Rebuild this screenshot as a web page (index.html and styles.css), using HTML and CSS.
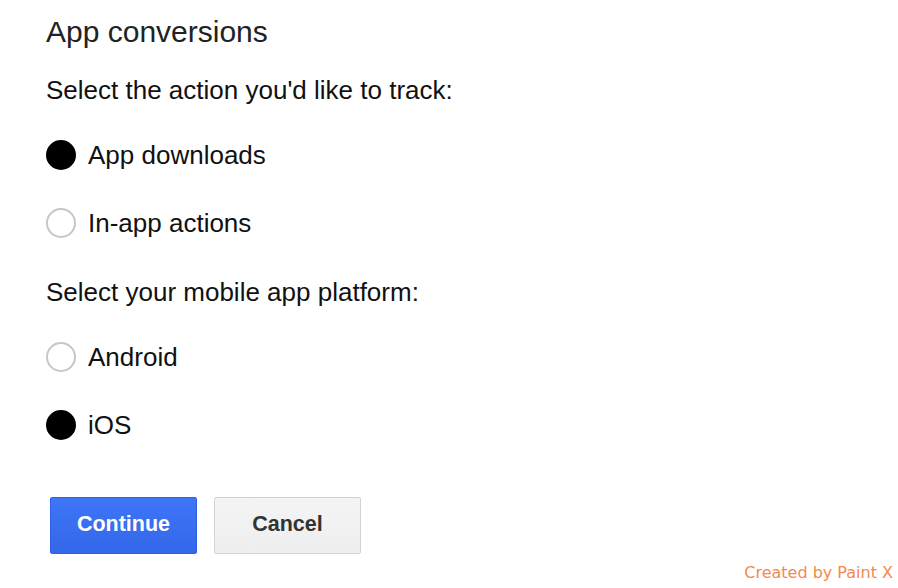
FILE: index.html
```html
<!DOCTYPE html>
<html>
<head>
<meta charset="utf-8">
<link rel="stylesheet" href="styles.css">
</head>
<body>
<div class="page">
  <h1 class="title">App conversions</h1>
  <p class="prompt prompt-first">Select the action you'd like to track:</p>
  <div class="options">
    <label class="option"><span class="radio radio-on"></span><span class="label">App downloads</span></label>
    <label class="option"><span class="radio"></span><span class="label">In-app actions</span></label>
  </div>
  <p class="prompt prompt-second">Select your mobile app platform:</p>
  <div class="options">
    <label class="option"><span class="radio"></span><span class="label">Android</span></label>
    <label class="option"><span class="radio radio-on"></span><span class="label">iOS</span></label>
  </div>
  <div class="actions">
    <button class="btn btn-primary">Continue</button>
    <button class="btn btn-secondary">Cancel</button>
  </div>
  <div class="credit">Created by Paint X</div>
</div>
</body>
</html>
```
FILE: styles.css
```css
html, body {
  margin: 0;
  padding: 0;
  background: #ffffff;
}
body {
  font-family: "Liberation Sans", Arial, Helvetica, sans-serif;
  color: #222222;
}
.page {
  width: 898px;
  height: 588px;
  box-sizing: border-box;
  padding: 12px 0 0 46px;
  display: flex;
  flex-direction: column;
  position: relative;
}
.title {
  margin: 0;
  font-size: 30px;
  font-weight: normal;
  line-height: 40px;
  color: #222222;
}
.prompt {
  margin: 0;
  font-size: 26px;
  line-height: 36px;
  color: #111111;
}
.prompt-first { margin-top: 20px; }
.prompt-second { margin-top: 31px; }
.options {
  display: flex;
  flex-direction: column;
  gap: 28px;
  margin-top: 27px;
}
.option {
  display: flex;
  align-items: center;
  height: 40px;
  gap: 12px;
}
.radio {
  width: 30px;
  height: 30px;
  box-sizing: border-box;
  border-radius: 50%;
  border: 2px solid #c6c6c6;
  background: #ffffff;
  flex: none;
}
.radio-on {
  border-color: #000000;
  background: #000000;
}
.label {
  font-size: 26px;
  color: #111111;
}
.actions {
  display: flex;
  gap: 17px;
  margin-top: 52px;
  padding-left: 4px;
}
.btn {
  width: 147px;
  height: 57px;
  box-sizing: border-box;
  font-family: "Liberation Sans", Arial, Helvetica, sans-serif;
  font-weight: bold;
  font-size: 21.5px;
  border-radius: 2px;
  padding: 0 0 3px 0;
}
.btn-primary {
  background: linear-gradient(#3d76f7, #3467e9);
  border: 1px solid #2e5fe6;
  color: #ffffff;
}
.btn-secondary {
  background: linear-gradient(#f4f4f4, #eeeeee);
  border: 1px solid #d3d3d3;
  color: #333333;
}
.credit {
  position: absolute;
  right: 5px;
  bottom: 6px;
  font-family: "DejaVu Sans", Verdana, sans-serif;
  font-size: 16px;
  color: #f4894f;
}
```
